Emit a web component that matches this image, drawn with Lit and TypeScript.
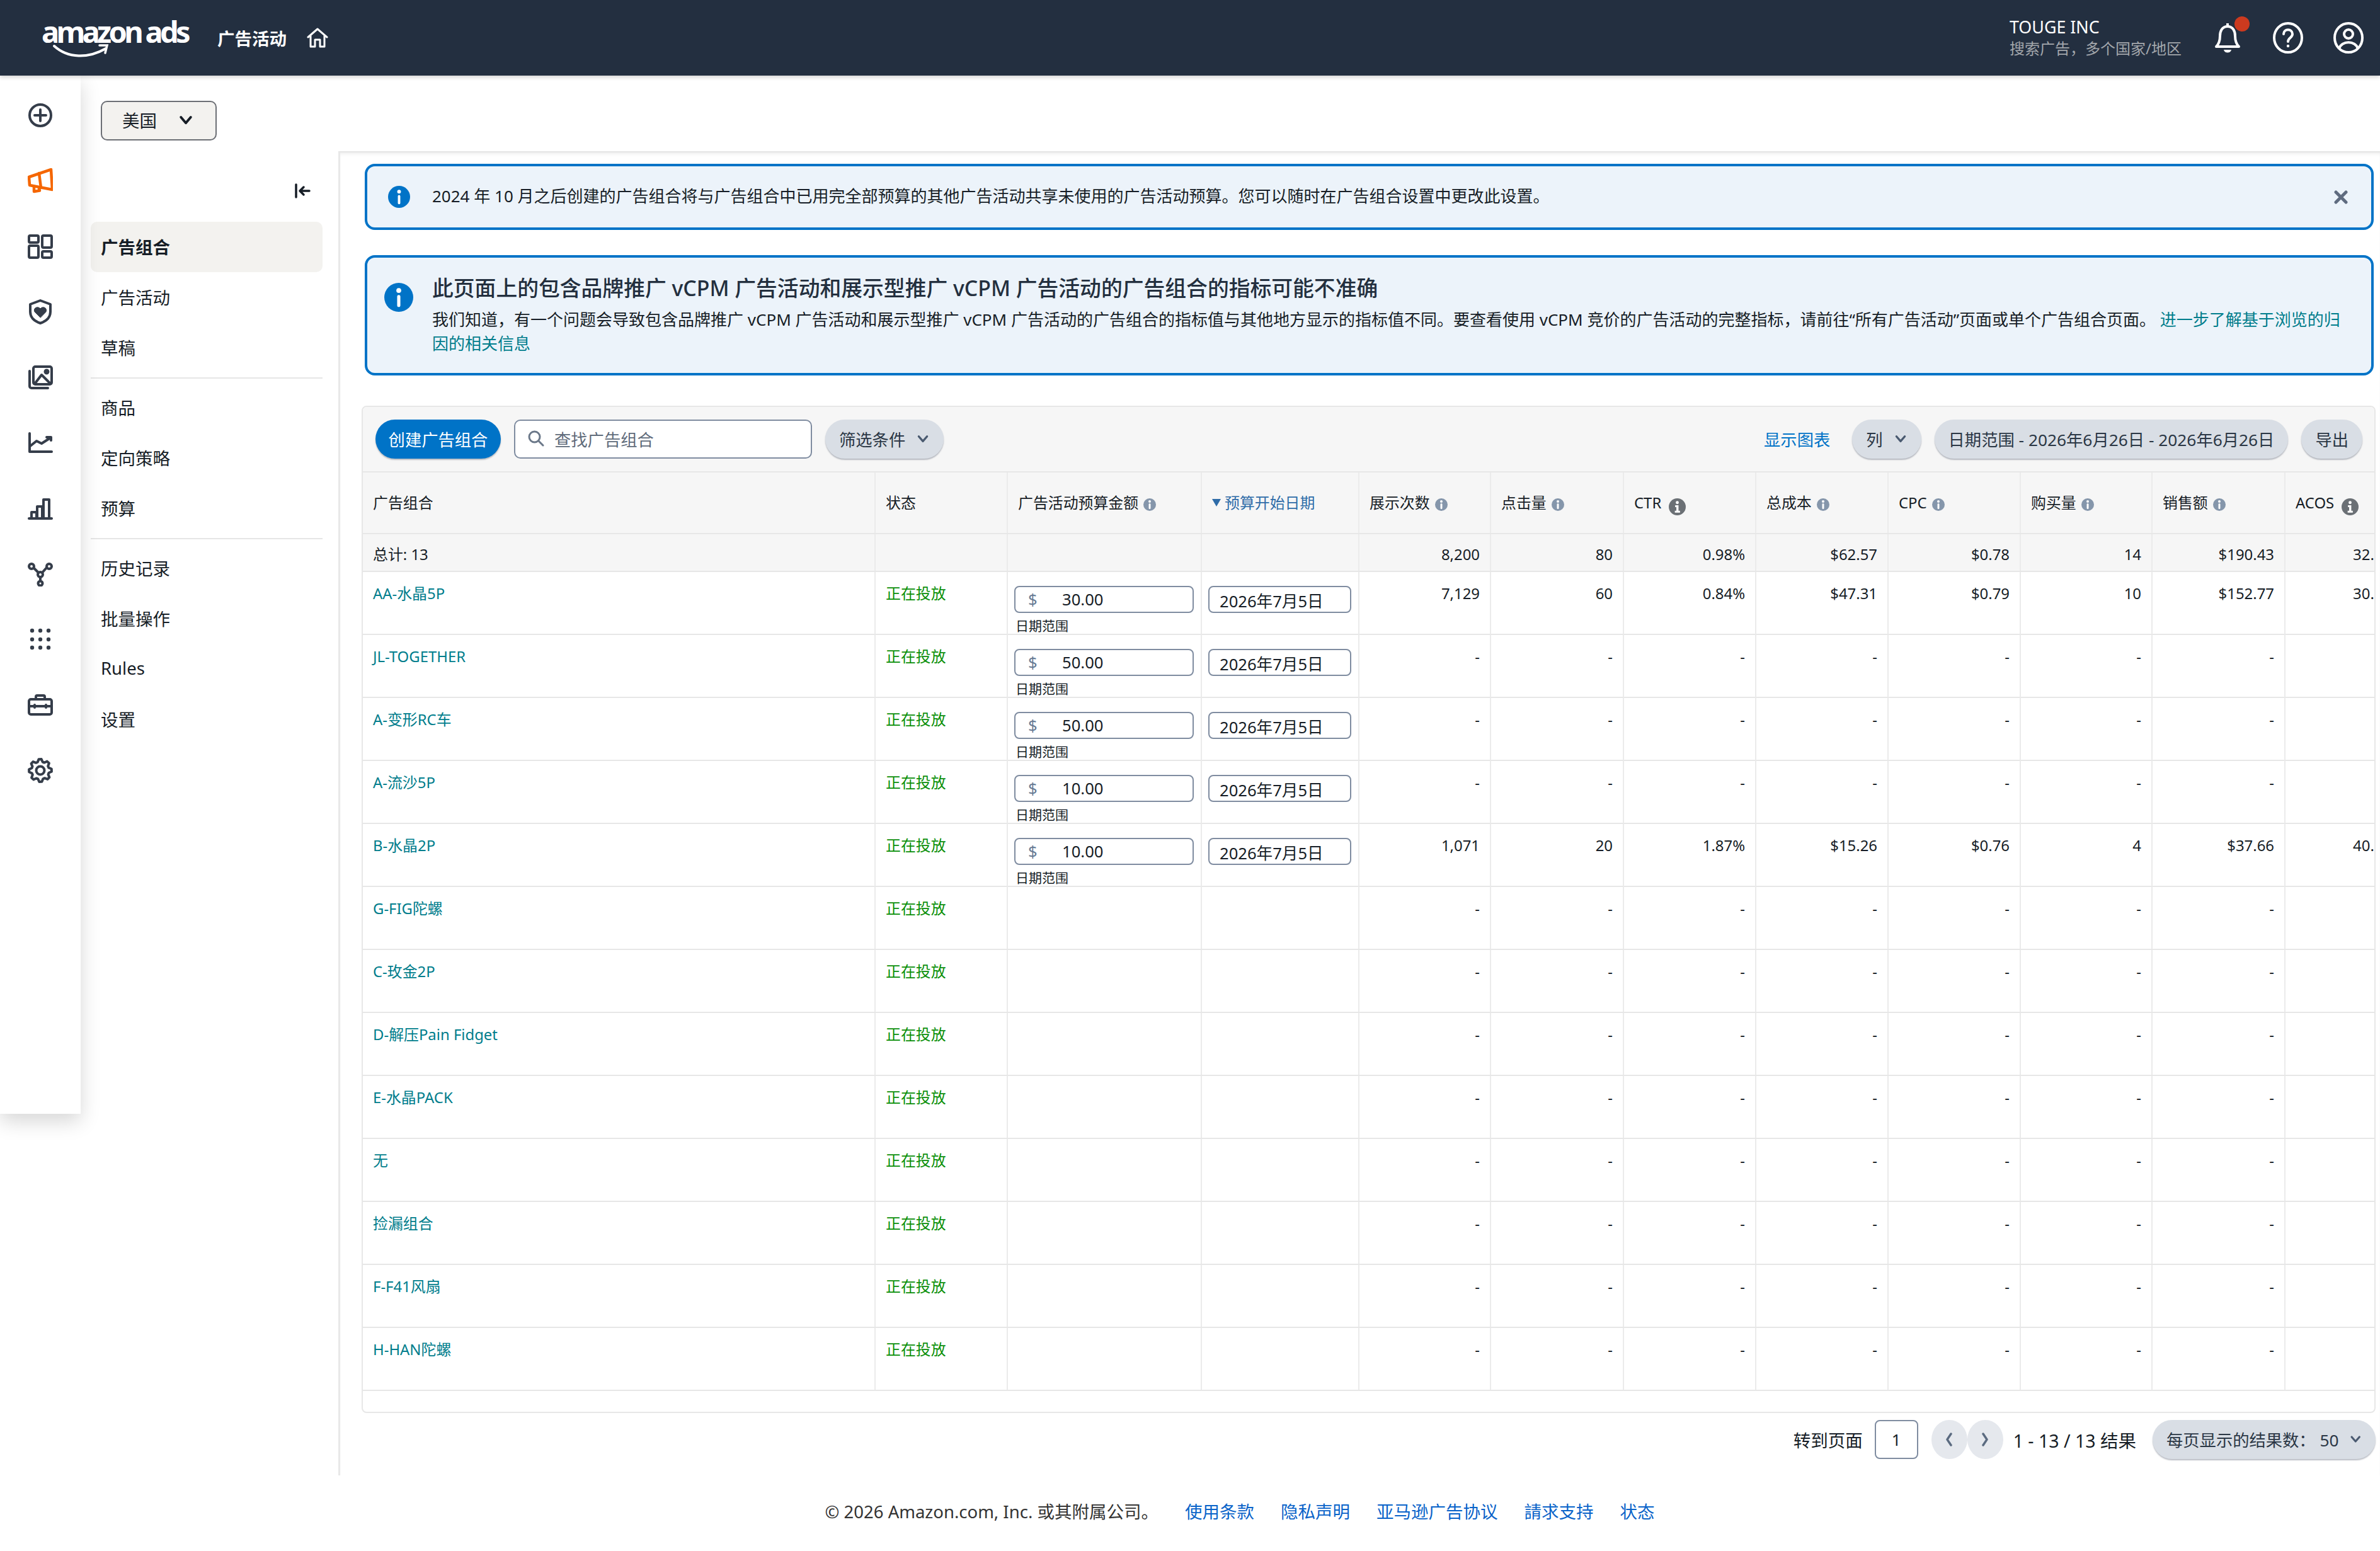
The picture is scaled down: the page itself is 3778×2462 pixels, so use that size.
import { LitElement, html, css, svg } from 'lit';
import { customElement } from 'lit/decorators.js';

type Row = {
  name: string;
  budget?: string;
  stats?: string[];
};

const DASHES = ['-', '-', '-', '-', '-', '-', '-', '-'];

const ROWS: Row[] = [
  { name: 'AA-水晶5P', budget: '30.00', stats: ['7,129', '60', '0.84%', '$47.31', '$0.79', '10', '$152.77', '30.97%'] },
  { name: 'JL-TOGETHER', budget: '50.00' },
  { name: 'A-变形RC车', budget: '50.00' },
  { name: 'A-流沙5P', budget: '10.00' },
  { name: 'B-水晶2P', budget: '10.00', stats: ['1,071', '20', '1.87%', '$15.26', '$0.76', '4', '$37.66', '40.52%'] },
  { name: 'G-FIG陀螺' },
  { name: 'C-玫金2P' },
  { name: 'D-解压Pain Fidget' },
  { name: 'E-水晶PACK' },
  { name: '无' },
  { name: '捡漏组合' },
  { name: 'F-F41风扇' },
  { name: 'H-HAN陀螺' },
];

const TOTALS = ['8,200', '80', '0.98%', '$62.57', '$0.78', '14', '$190.43', '32.86%'];

function gearPoints(): string {
  const pts: string[] = [];
  const teeth = 8;
  for (let i = 0; i < teeth; i++) {
    const a = (i / teeth) * Math.PI * 2;
    const step = (Math.PI * 2) / teeth;
    for (const [r, off] of [[14, -0.5], [18, -0.28], [18, 0.02], [14, 0.24]] as const) {
      const t = a + off * step + step * 0.1;
      pts.push(`${(20 + r * Math.cos(t)).toFixed(1)},${(20 + r * Math.sin(t)).toFixed(1)}`);
    }
  }
  return pts.join(' ');
}

const railIcons = [
  svg`<circle cx="20" cy="20" r="17"/><path d="M20 11v18M11 20h18"/>`,
  svg`<g stroke="#f56600" stroke-width="4.500"><path d="M2 14 37 2l2 32-36-7z"/><path d="M18 8l3 23M10 29v8l9-1.500-1-3"/></g>`,
  svg`<rect x="2" y="3" width="15" height="11" rx="2"/><rect x="23" y="3" width="15" height="19" rx="2"/><rect x="2" y="19" width="15" height="19" rx="2"/><rect x="23" y="28" width="15" height="10" rx="2"/>`,
  svg`<path d="M20 2 36 8v12c0 9-7 15-16 18C11 35 4 29 4 20V8z"/><path d="M20 29l-9-9c-3-6 5-10 9-5 4-5 12-1 9 5z" fill="#353d4a" stroke-width="1"/>`,
  svg`<rect x="9" y="3" width="29" height="28" rx="3"/><path d="M3 10v24a3 3 0 0 0 3 3h26"/><path d="M12 29l10-13 13 13"/><circle cx="30" cy="11" r="2.500" fill="#353d4a"/>`,
  svg`<path d="M3 5v29h35"/><path d="M4 25l10-8 8 4 14-9M30 11h7v5"/>`,
  svg`<path d="M2 36h36"/><path d="M6 36V26h8v10M15 36V17h8v19M25 36V6h9v30"/>`,
  svg`<circle cx="6" cy="8" r="4"/><circle cx="34" cy="8" r="4"/><circle cx="20" cy="21" r="4"/><circle cx="20" cy="35" r="3.500"/><path d="M10 11l7 7M30 10l-7 8M20 25v6"/>`,
  svg`<g fill="#353d4a" stroke="none">${[7, 20, 33].flatMap((x) => [6, 20, 33].map((y) => svg`<circle cx=${x} cy=${y} r="3.200"/>`))}</g>`,
  svg`<rect x="2" y="11" width="36" height="24" rx="3"/><path d="M13 11V7a2 2 0 0 1 2-2h10a2 2 0 0 1 2 2v4M2 22h36M11 20v4M29 20v4"/>`,
  svg`<polygon points=${gearPoints()} stroke-linejoin="round"/><circle cx="20" cy="20" r="6.500"/>`,
];

const chevron = (cls = 'chev') => html`<svg class=${cls} viewBox="0 0 20 20" fill="none" stroke="currentColor" stroke-width="3" stroke-linecap="round" stroke-linejoin="round"><path d="M4 7l6 7 6-7"/></svg>`;

const bannerInfo = (cls: string) => html`<svg class="binfo ${cls}" viewBox="0 0 36 36"><circle cx="18" cy="18" r="18" fill="#0073c7"/><circle cx="18" cy="9.500" r="3" fill="#fff"/><rect x="16" y="15" width="4" height="15" rx="2" fill="#fff"/></svg>`;

const smallInfo = html`<svg class="sinfo" viewBox="0 0 20 20"><circle cx="10" cy="10" r="10" fill="#8596ab"/><circle cx="10" cy="5" r="2" fill="#fff"/><rect x="8.500" y="8" width="3" height="9" rx="1.500" fill="#fff"/></svg>`;

const darkInfo = html`<svg class="dinfo" viewBox="0 0 28 28"><circle cx="14" cy="14" r="14" fill="#6b7075"/><circle cx="14" cy="7" r="2.500" fill="#fff"/><path d="M10.500 11.500h5.500v9h2.500v3h-8.500v-3h2.500v-6h-2z" fill="#fff"/></svg>`;

@customElement('app-root')
export class AppRoot extends LitElement {
  static override styles = css`
    :host {
      display: block;
      width: 3778px;
      height: 2462px;
      overflow: hidden;
      background: #fff;
      color: #161d26;
      font-family: 'Noto Sans', 'Noto Sans CJK SC', sans-serif;
      font-size: 23.9px;
    }
    .topbar {
      height: 120px;
      background: #232f40;
      display: flex;
      align-items: center;
      color: #fff;
      box-shadow: 0 3px 6px rgba(0, 0, 0, 0.16);
      position: relative;
      z-index: 3;
    }
    .logo {
      margin-left: 66px;
      width: 246px;
      height: 120px;
      display: flex;
      flex-direction: column;
      flex: none;
    }
    .logo-text {
      font-size: 47px;
      line-height: 56px;
      margin-top: 22px;
      font-weight: 700;
      letter-spacing: -4.7px;
      white-space: nowrap;
    }
    .smile {
      width: 90px;
      height: 24px;
      margin: -8px 0 0 18px;
    }
    .top-title {
      margin-left: 33px;
      font-size: 27.5px;
      font-weight: 600;
    }
    .home {
      width: 34px;
      height: 34px;
      margin-left: 32px;
    }
    .account {
      margin-left: auto;
      width: 322px;
    }
    .acc-name {
      font-size: 26.800px;
      line-height: 34px;
    }
    .acc-sub {
      font-size: 24px;
      line-height: 34px;
      color: #a2a6ab;
    }
    .top-icons {
      display: flex;
      align-items: center;
      gap: 48px;
      margin-right: 26px;
    }
    .bell-wrap {
      position: relative;
      width: 48px;
      height: 50px;
    }
    .bell-wrap svg,
    .top-icons > svg {
      width: 48px;
      height: 50px;
      display: block;
    }
    .dot {
      position: absolute;
      width: 24px;
      height: 24px;
      border-radius: 50%;
      background: #cc3a1f;
      left: 35px;
      top: -9px;
    }
    .layout {
      display: flex;
      align-items: flex-start;
    }
    .rail {
      width: 128px;
      height: 1648px;
      flex: none;
      background: #fff;
      box-shadow: 0 12px 30px rgba(0, 0, 0, 0.16);
      padding-top: 11px;
      box-sizing: border-box;
      display: flex;
      flex-direction: column;
      align-items: center;
      position: relative;
      z-index: 2;
    }
    .rail-slot {
      height: 104px;
      display: flex;
      align-items: center;
    }
    .rail-slot svg {
      width: 40px;
      height: 40px;
      fill: none;
      stroke: #353d4a;
      stroke-width: 4;
      stroke-linejoin: round;
      stroke-linecap: round;
    }
    .content {
      flex: 1;
      min-width: 0;
    }
    .columns {
      display: flex;
      align-items: flex-start;
    }
    .subnav {
      width: 409px;
      flex: none;
      padding-top: 40px;
      box-sizing: border-box;
    }
    .region {
      margin-left: 32px;
      width: 184px;
      height: 63px;
      box-sizing: border-box;
      border: 2px solid #6c6f75;
      border-radius: 10px;
      background: #f3f2ef;
      display: flex;
      align-items: center;
      padding: 0 0 3px 32px;
      font-size: 27.5px;
    }
    .region .chev {
      width: 26px;
      height: 26px;
      margin-left: 33px;
    }
    .collapse {
      margin-top: 68px;
      height: 24px;
      display: flex;
      justify-content: flex-end;
      padding-right: 44px;
    }
    .collapse svg {
      width: 26px;
      height: 24px;
    }
    .nav-list {
      margin-top: 37px;
    }
    .nav-item {
      margin-left: 16px;
      width: 368px;
      height: 80px;
      box-sizing: border-box;
      padding: 0 0 3px 16px;
      display: flex;
      align-items: center;
      font-size: 27.5px;
      border-radius: 10px;
    }
    .nav-item.on {
      background: #f3f2ef;
      font-weight: 700;
    }
    .nav-sep {
      margin: 7px 0 6px 16px;
      width: 368px;
      height: 2px;
      background: #e6e6e6;
    }
    .main {
      flex: 1;
      min-width: 0;
      margin-top: 120px;
      height: 2102px;
      box-sizing: border-box;
      border-left: 3px solid #e8e8e8;
      border-top: 2px solid #e6e6e6;
      box-shadow: inset 0 5px 6px -4px rgba(0, 0, 0, 0.1);
      padding: 18px 7px 0 34px;
    }
    .banner {
      margin: 0 3px 0 5px;
      border: 4px solid #0073c7;
      border-radius: 16px;
      background: #ecf3fa;
      box-sizing: border-box;
      display: flex;
      font-size: 26px;
    }
    .b1 {
      height: 105px;
      align-items: center;
      padding: 0 37px 0 33px;
    }
    .b2 {
      height: 191px;
      margin-top: 40px;
      padding: 25px 30px 0 27px;
    }
    .binfo {
      flex: none;
    }
    .binfo.sm {
      width: 35px;
      height: 35px;
    }
    .binfo.lg {
      width: 46px;
      height: 46px;
      margin-top: 15px;
    }
    .b1 .btext {
      margin-left: 35px;
      flex: 1;
      padding-bottom: 5px;
    }
    .close {
      width: 22px;
      height: 22px;
      flex: none;
      stroke: #5f6b7f;
      stroke-width: 5;
      stroke-linecap: round;
      fill: none;
    }
    .b2-body {
      margin-left: 30px;
      flex: 1;
    }
    .b2-title {
      font-size: 33.800px;
      line-height: 46px;
      font-weight: 500;
      color: #232f3e;
    }
    .b2-copy {
      line-height: 38px;
      margin-top: 8px;
    }
    .teal {
      color: #007d8c;
    }
    .card {
      margin-top: 48px;
      border: 2px solid #e7e7e7;
      border-radius: 8px;
      overflow: hidden;
      background: #fff;
      height: 1595px;
    }
    .toolbar {
      height: 102px;
      background: #f6f6f6;
      display: flex;
      align-items: center;
      padding: 0 19px 0 20px;
      gap: 21px;
      font-size: 26.3px;
    }
    .btn {
      height: 62px;
      border-radius: 31px;
      background: #d9dee5;
      color: #2b3745;
      display: flex;
      align-items: center;
      box-sizing: border-box;
      padding: 0 22px 2px;
      box-shadow: 0 2px 2px rgba(60, 70, 90, 0.35);
      white-space: nowrap;
      font-size: 26.3px;
    }
    .btn .chev {
      width: 22px;
      height: 22px;
      margin-left: 17px;
      color: #4a5a70;
    }
    .btn.primary {
      background: #0073c7;
      color: #fff;
      width: 199px;
      justify-content: center;
      padding: 0 0 2px;
    }
    .search {
      width: 473px;
      height: 62px;
      box-sizing: border-box;
      border: 2.500px solid #7f8ca0;
      border-radius: 10px;
      background: #fff;
      display: flex;
      align-items: center;
      color: #5f6b7a;
      padding: 0 0 2px 19px;
    }
    .search svg {
      width: 28px;
      height: 28px;
      margin-right: 15px;
    }
    .show-chart {
      margin-left: auto;
      color: #0073c7;
      margin-right: 14px;
      padding-bottom: 2px;
    }
    .row {
      display: grid;
      grid-template-columns: 814px 210px 308px 250px 209px 211px 210px 210px 210px 209px 211px 206px;
      border-bottom: 2px solid #e7e7e7;
      box-sizing: border-box;
      height: 100px;
      width: 3258px;
    }
    .row.head {
      background: #f6f6f6;
      border-top: 2px solid #e7e7e7;
    }
    .row.total {
      height: 60px;
      background: #f6f6f6;
    }
    .cell {
      border-right: 2px solid #ebebeb;
      padding: 18px 16px 0;
      line-height: 32px;
      box-sizing: border-box;
      min-width: 0;
    }
    .num {
      text-align: right;
      padding-right: 16px;
    }
    .head .cell {
      padding-top: 32px;
      display: flex;
      align-items: flex-start;
      white-space: nowrap;
    }
    .total .cell {
      padding-top: 16px;
    }
    .sinfo {
      width: 20px;
      height: 20px;
      margin: 9px 0 0 8px;
      flex: none;
    }
    .dinfo {
      width: 27px;
      height: 27px;
      margin: 9px 0 0 12px;
      flex: none;
    }
    .sorted {
      color: #2f6ca8;
    }
    .tri {
      width: 14px;
      height: 12px;
      margin: 10px 6px 0 0;
      fill: #2f6ca8;
      flex: none;
    }
    .link {
      color: #007d8c;
    }
    .live {
      color: #0a8f08;
    }
    .cell.budget,
    .cell.date {
      padding: 22px 10px 0 10px;
    }
    .money {
      width: 285px;
      height: 43px;
      box-sizing: border-box;
      border: 2px solid #7f8ca0;
      border-radius: 8px;
      display: flex;
      align-items: center;
      font-size: 25.6px;
      padding-left: 20px;
    }
    .cur {
      color: #667a94;
      width: 54px;
    }
    .under {
      font-size: 21px;
      line-height: 28px;
      margin: 6px 0 0 2px;
    }
    .datebox {
      width: 227px;
      height: 43px;
      box-sizing: border-box;
      border: 2px solid #7f8ca0;
      border-radius: 8px;
      font-size: 25.6px;
      line-height: 46px;
      padding-left: 16px;
      white-space: nowrap;
    }
    .pager {
      margin-top: 11px;
      display: flex;
      align-items: center;
      justify-content: flex-end;
      height: 62px;
      font-size: 27.5px;
    }
    .goto-input {
      width: 69px;
      height: 62px;
      box-sizing: border-box;
      border: 2px solid #7f8ca0;
      border-radius: 8px;
      margin: 0 21px 0 19px;
      display: flex;
      align-items: center;
      justify-content: center;
      font-size: 25.6px;
    }
    .nav-circle {
      width: 57px;
      height: 62px;
      border-radius: 50%;
      background: #e5e8ed;
      display: flex;
      align-items: center;
      justify-content: center;
    }
    .nav-circle svg {
      width: 20px;
      height: 26px;
      stroke: #5b6b80;
      stroke-width: 3.5;
      fill: none;
      stroke-linecap: round;
      stroke-linejoin: round;
    }
    .pg-count {
      margin: 0 26px 0 16px;
      font-size: 28.5px;
    }
    .per-page {
      width: 354px;
    }
    .per-page .chev {
      margin-left: 16px;
    }
    .footer {
      display: flex;
      justify-content: center;
      gap: 42px;
      font-size: 27.5px;
      color: #333;
      margin-top: 38px;
      margin-left: 30px;
      line-height: 40px;
    }
    .footer a {
      color: #0a63c9;
      text-decoration: none;
    }
  `;

  private renderRow(r: Row) {
    const stats = r.stats ?? DASHES;
    return html`<div class="row">
      <div class="cell link">${r.name}</div>
      <div class="cell live">正在投放</div>
      ${r.budget
        ? html`<div class="cell budget">
              <div class="money"><span class="cur">$</span>${r.budget}</div>
              <div class="under">日期范围</div>
            </div>
            <div class="cell date"><div class="datebox">2026年7月5日</div></div>`
        : html`<div class="cell"></div>
            <div class="cell"></div>`}
      ${stats.map((s) => html`<div class="cell num">${s}</div>`)}
    </div>`;
  }

  override render() {
    return html`
      <div class="topbar">
        <div class="logo">
          <div class="logo-text">amazon ads</div>
          <svg class="smile" viewBox="0 0 90 24" fill="none" stroke="#fff" stroke-linecap="round">
            <path d="M2 3c22 20 54 20 82 4" stroke-width="4"/>
            <path d="M74 2h12l-3 12" stroke-width="3.500"/>
          </svg>
        </div>
        <div class="top-title">广告活动</div>
        <svg class="home" viewBox="0 0 34 34" fill="none" stroke="#fff" stroke-width="3" stroke-linejoin="round" stroke-linecap="round">
          <path d="M2 16 17 3l15 13M6 14v17h7V20h8v11h7V14"/>
        </svg>
        <div class="account">
          <div class="acc-name">TOUGE INC</div>
          <div class="acc-sub">搜索广告，多个国家/地区</div>
        </div>
        <div class="top-icons">
          <div class="bell-wrap">
            <svg viewBox="0 0 48 50" fill="none" stroke="#fff" stroke-width="4" stroke-linejoin="round">
              <path d="M24 2v5M24 7c-9 0-12 8-12 15 0 8-2 13-6 17h36c-4-4-6-9-6-17 0-7-3-15-12-15z"/>
              <path d="M18 44c1 6 11 6 12 0z" fill="#fff" stroke="none"/>
            </svg>
            <span class="dot"></span>
          </div>
          <svg viewBox="0 0 48 50" fill="none" stroke="#fff" stroke-width="4" stroke-linecap="round">
            <ellipse cx="24" cy="25" rx="22" ry="23"/>
            <path d="M17 19c0-9 14-9 14 0 0 6-7 6-7 12"/>
            <circle cx="24" cy="38" r="2.200" fill="#fff" stroke="none"/>
          </svg>
          <svg viewBox="0 0 48 50" fill="none" stroke="#fff" stroke-width="4">
            <ellipse cx="24" cy="25" rx="22" ry="23"/>
            <circle cx="24" cy="19" r="7"/>
            <path d="M9 42c4-13 26-13 30 0"/>
          </svg>
        </div>
      </div>

      <div class="layout">
        <div class="rail">
          ${railIcons.map((i) => html`<div class="rail-slot"><svg viewBox="0 0 40 40">${i}</svg></div>`)}
        </div>
        <div class="content">
          <div class="columns">
            <div class="subnav">
              <div class="region">美国${chevron()}</div>
              <div class="collapse">
                <svg viewBox="0 0 26 24" fill="none" stroke="#161d26" stroke-width="3.500" stroke-linecap="round" stroke-linejoin="round">
                  <path d="M3 2v20M24 12H10M15 6l-6 6 6 6"/>
                </svg>
              </div>
              <div class="nav-list">
                <div class="nav-item on">广告组合</div>
                <div class="nav-item">广告活动</div>
                <div class="nav-item">草稿</div>
                <div class="nav-sep"></div>
                <div class="nav-item">商品</div>
                <div class="nav-item">定向策略</div>
                <div class="nav-item">预算</div>
                <div class="nav-sep"></div>
                <div class="nav-item">历史记录</div>
                <div class="nav-item">批量操作</div>
                <div class="nav-item">Rules</div>
                <div class="nav-item">设置</div>
              </div>
            </div>
            <div class="main">
              <div class="banner b1">
                ${bannerInfo('sm')}
                <div class="btext">2024 年 10 月之后创建的广告组合将与广告组合中已用完全部预算的其他广告活动共享未使用的广告活动预算。您可以随时在广告组合设置中更改此设置。</div>
                <svg class="close" viewBox="0 0 22 22"><path d="M3 3l16 16M19 3 3 19"/></svg>
              </div>
              <div class="banner b2">
                ${bannerInfo('lg')}
                <div class="b2-body">
                  <div class="b2-title">此页面上的包含品牌推广 vCPM 广告活动和展示型推广 vCPM 广告活动的广告组合的指标可能不准确</div>
                  <div class="b2-copy">我们知道，有一个问题会导致包含品牌推广 vCPM 广告活动和展示型推广 vCPM 广告活动的广告组合的指标值与其他地方显示的指标值不同。要查看使用 vCPM 竞价的广告活动的完整指标，请前往“所有广告活动”页面或单个广告组合页面。 <span class="teal">进一步了解基于浏览的归因的相关信息</span></div>
                </div>
              </div>

              <div class="card">
                <div class="toolbar">
                  <div class="btn primary">创建广告组合</div>
                  <div class="search">
                    <svg viewBox="0 0 28 28" fill="none" stroke="#6b7889" stroke-width="3" stroke-linecap="round"><circle cx="11.500" cy="11.500" r="8.500"/><path d="M18 18l7 7"/></svg>
                    查找广告组合
                  </div>
                  <div class="btn">筛选条件${chevron()}</div>
                  <div class="show-chart">显示图表</div>
                  <div class="btn">列${chevron()}</div>
                  <div class="btn">日期范围 - 2026年6月26日 - 2026年6月26日</div>
                  <div class="btn">导出</div>
                </div>
                <div class="row head">
                  <div class="cell">广告组合</div>
                  <div class="cell">状态</div>
                  <div class="cell">广告活动预算金额${smallInfo}</div>
                  <div class="cell sorted"><svg class="tri" viewBox="0 0 14 12"><path d="M0 0h14L7 12z"/></svg>预算开始日期</div>
                  <div class="cell">展示次数${smallInfo}</div>
                  <div class="cell">点击量${smallInfo}</div>
                  <div class="cell">CTR${darkInfo}</div>
                  <div class="cell">总成本${smallInfo}</div>
                  <div class="cell">CPC${smallInfo}</div>
                  <div class="cell">购买量${smallInfo}</div>
                  <div class="cell">销售额${smallInfo}</div>
                  <div class="cell">ACOS${darkInfo}</div>
                </div>
                <div class="row total">
                  <div class="cell">总计: 13</div>
                  <div class="cell"></div>
                  <div class="cell"></div>
                  <div class="cell"></div>
                  ${TOTALS.map((t) => html`<div class="cell num">${t}</div>`)}
                </div>
                ${ROWS.map((r) => this.renderRow(r))}
              </div>

              <div class="pager">
                转到页面
                <div class="goto-input">1</div>
                <div class="nav-circle"><svg viewBox="0 0 20 26"><path d="M13 4l-6 9 6 9"/></svg></div>
                <div class="nav-circle"><svg viewBox="0 0 20 26"><path d="M7 4l6 9-6 9"/></svg></div>
                <div class="pg-count">1 - 13 / 13 结果</div>
                <div class="btn per-page">每页显示的结果数： 50${chevron()}</div>
              </div>
            </div>
          </div>
          <div class="footer">
            <span>© 2026 Amazon.com, Inc. 或其附属公司。</span>
            <a>使用条款</a>
            <a>隐私声明</a>
            <a>亚马逊广告协议</a>
            <a>請求支持</a>
            <a>状态</a>
          </div>
        </div>
      </div>
    `;
  }
}
